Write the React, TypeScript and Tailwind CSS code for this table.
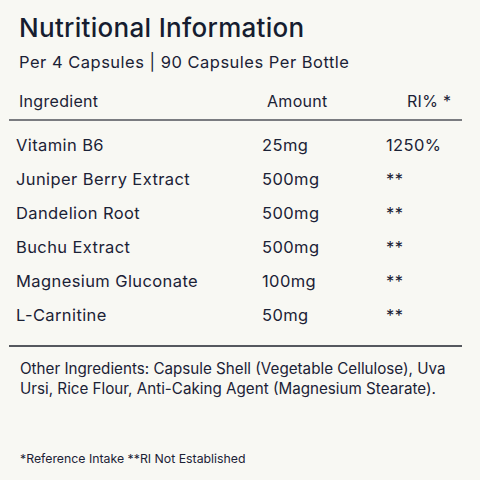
const rows = [
  { name: 'Vitamin B6', amount: '25mg', ri: '1250%' },
  { name: 'Juniper Berry Extract', amount: '500mg', ri: '**' },
  { name: 'Dandelion Root', amount: '500mg', ri: '**' },
  { name: 'Buchu Extract', amount: '500mg', ri: '**' },
  { name: 'Magnesium Gluconate', amount: '100mg', ri: '**' },
  { name: 'L-Carnitine', amount: '50mg', ri: '**' },
];

export default function App() {
  return (
    <div className="w-[480px] h-[480px] overflow-hidden bg-[#f8f8f3] text-[#1b2236] font-['Inter',sans-serif]">
      {/* Heading */}
      <div className="pl-[19px] pt-[11px]">
        <h1 className="text-[26px] leading-[34px] font-medium tracking-[0.3px] text-[#161d30]">Nutritional Information</h1>
        <p className="mt-[6px] text-[16.5px] leading-[22px] tracking-[0.5px]">Per 4 Capsules | 90 Capsules Per Bottle</p>
      </div>

      {/* Table */}
      <div className="mt-[18px] grid grid-cols-[248px_140px_1fr] pl-[19px] text-[16px] leading-[20px] tracking-[0.3px]">
        <span>Ingredient</span>
        <span>Amount</span>
        <span>RI% *</span>
      </div>
      <div className="mx-[9px] mt-[8px] w-[453px] h-[2px] bg-[#7a7c80]" />

      <div className="pt-[13px] pl-[16px] text-[16.5px] tracking-[0.4px]">
        {rows.map((r) => (
          <div key={r.name} className="grid grid-cols-[246px_124px_1fr] h-[34px] leading-[22px]">
            <span>{r.name}</span>
            <span>{r.amount}</span>
            <span>{r.ri}</span>
          </div>
        ))}
      </div>

      <div className="mx-[9px] mt-[7px] w-[453px] h-[1.5px] bg-[#55585e]" />

      <p className="mt-[12px] pl-[20px] pr-[20px] text-[15.2px] leading-[20px]">
        Other Ingredients: Capsule Shell (Vegetable Cellulose), Uva Ursi, Rice Flour, Anti-Caking Agent (Magnesium Stearate).
      </p>

      <p className="mt-[51px] pl-[20px] text-[12.3px] leading-[18px]">*Reference Intake **RI Not Established</p>
    </div>
  );
}
